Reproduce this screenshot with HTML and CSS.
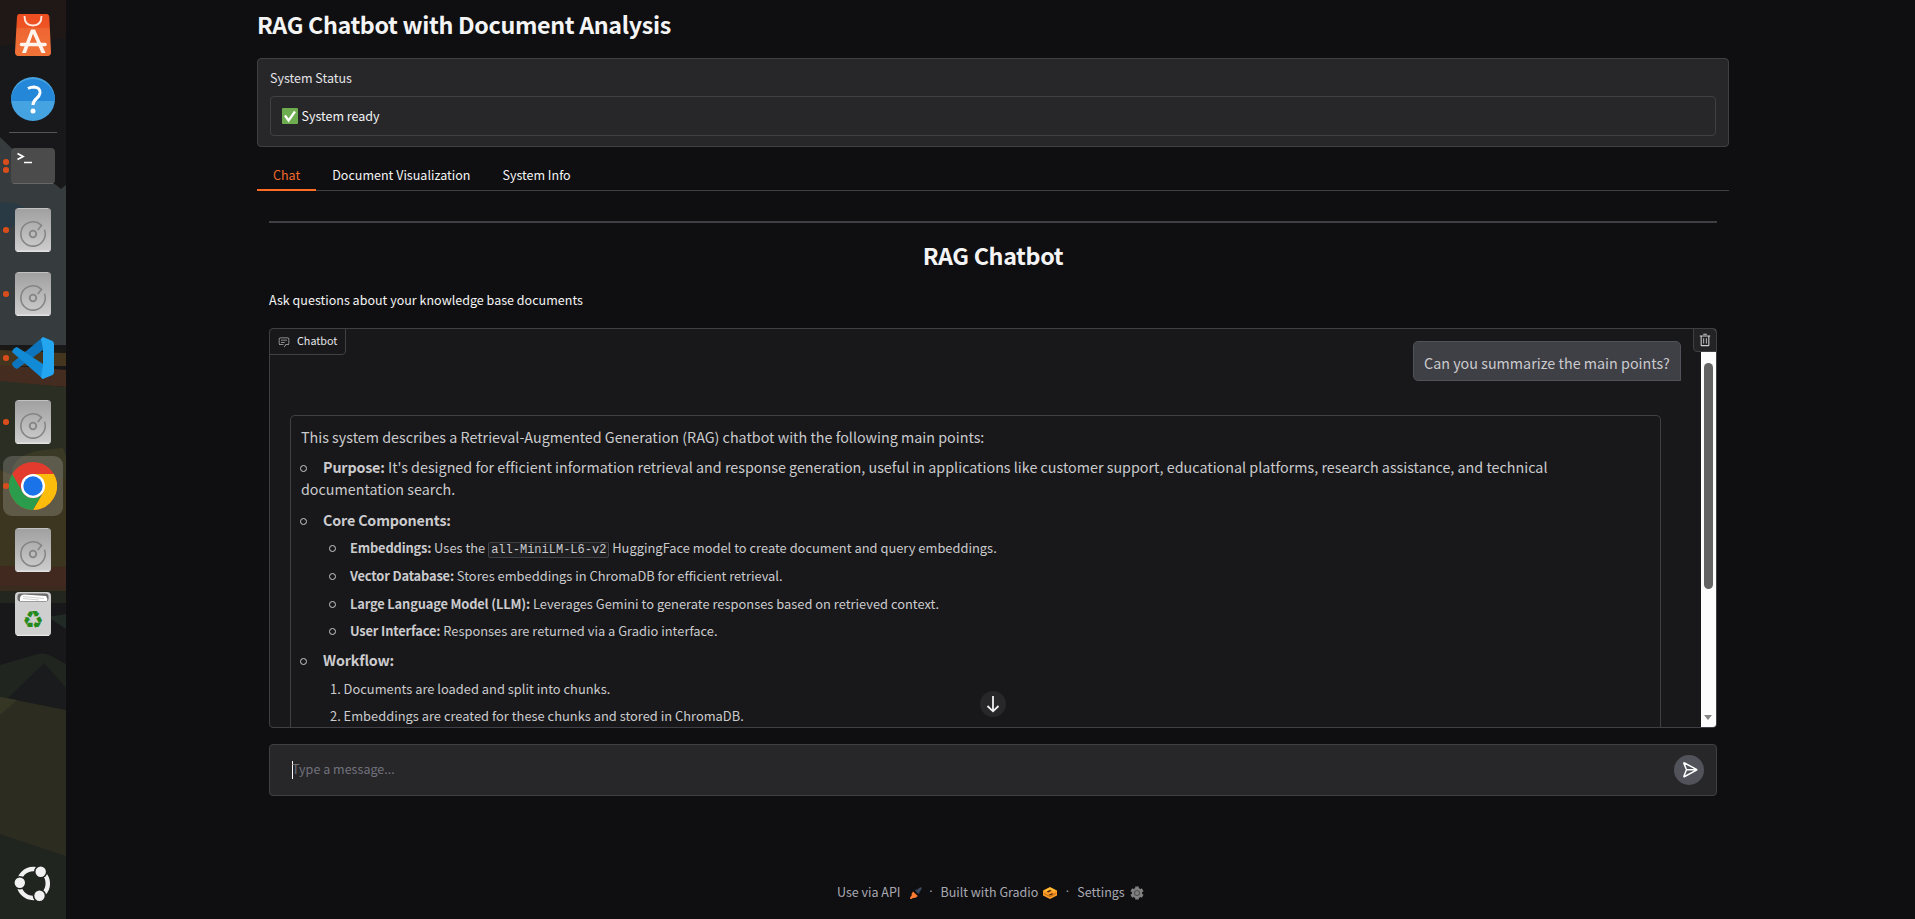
FILE: index.html
```html
<!DOCTYPE html>
<html lang="en">
<head>
<meta charset="utf-8">
<title>RAG Chatbot</title>
<link rel="stylesheet" href="styles.css">
</head>
<body>
<svg width="0" height="0" class="defs" aria-hidden="true">
  <defs>
    <linearGradient id="gDisk" x1="0" y1="0" x2="0" y2="1"><stop offset="0" stop-color="#9f9f9f"/><stop offset="1" stop-color="#cecece"/></linearGradient>
    <symbol id="disk" viewBox="0 0 48 48">
      <rect x="6" y="2" width="36" height="44" rx="3.5" fill="url(#gDisk)"/>
      <path d="M8 45.2h32" stroke="#e4e4e4" stroke-width="1.4"/>
      <path d="M9 2.6h30" stroke="#c4c4c4" stroke-width="1"/>
      <g fill="none" stroke="#858585" stroke-width="1.6">
        <circle cx="24" cy="28" r="3.3" stroke-width="1.8"/>
        <path d="M35.500 23.800A12.200 12.200 0 1 1 28.500 16.600M28.500 16.300L32.500 19.300L28.800 24"/>
      </g>
    </symbol>
  </defs>
</svg>
<div class="desktop">
  <aside class="dock">
    <svg class="wallpaper" viewBox="0 0 66 919" preserveAspectRatio="none">
      <rect width="66" height="919" fill="#18181a"/>
      <path d="M0 0H66V38L0 46Z" fill="#201817"/>
      <path d="M0 137L32 168L56 185L61 189L66 185V345H0Z" fill="#363c3d"/>
      <path d="M0 202Q22 202 28 211Q17 230 0 229Z" fill="#293a44"/>
      <path d="M0 347L30 351L66 353V366H0Z" fill="#44351f"/>
      <path d="M0 346L30 348L66 349V353L0 350Z" fill="#1b1916"/>
      <path d="M0 365L66 370V387L0 382Z" fill="#452c20"/>
      <path d="M0 381L66 387V480H0Z" fill="#2b2e23"/>
      <path d="M12 470Q16 453 44 450L63 448L66 456V482H0L12 475Z" fill="#3a3925"/>
      <path d="M0 470L12 475L66 478V570H0Z" fill="#3c351f"/>
      <path d="M0 566L66 567V588H0Z" fill="#41291f"/>
      <path d="M0 586L66 587V592L0 591Z" fill="#392b1d"/>
      <path d="M0 591H66V603H0Z" fill="#22261f"/>
      <path d="M48 617L66 614V629Z" fill="#222a25"/>
      <path d="M0 665L38 654Q45 652 53 657L66 664V715H0Z" fill="#20251f"/>
      <path d="M8 698L44 663L66 688V713Z" fill="#191b1c"/>
      <path d="M0 697L66 710V857L0 835Z" fill="#2c2d20"/>
      <path d="M0 697L17 700L0 715Z" fill="#363625"/>
      <path d="M0 834L66 856V919H0Z" fill="#202520"/>
    </svg>
    <div class="app">
      <svg viewBox="0 0 48 48"><defs><linearGradient id="gSoft" x1="0" y1="0" x2="0" y2="1"><stop offset="0" stop-color="#ee4d20"/><stop offset=".32" stop-color="#ee5423"/><stop offset=".33" stop-color="#ef6532"/><stop offset="1" stop-color="#f07338"/></linearGradient></defs>
        <path d="M10.500 3H37.500Q40 3 40.300 6L42 41Q42.200 45 38.500 45H9.500Q6 45 6 41L8 6Q8.200 3 10.500 3Z" fill="url(#gSoft)"/>
        <path d="M15.500 5Q15.500 14.500 24 14.500T32.500 5" fill="none" stroke="#fde6dc" stroke-width="1.9"/>
        <path d="M22 18.500H26L36.500 42H32.500L24 22.800L17 42H13Z" fill="#fff5ee"/>
        <path d="M12.500 33.500H36" stroke="#fff5ee" stroke-width="3.600" stroke-linecap="round"/></svg>
    </div>
    <div class="app">
      <svg viewBox="0 0 48 48"><circle cx="24" cy="24" r="22" fill="#45a3e2"/><path d="M2 26A22 22 0 0 1 46 26Z" fill="#2587d8"/><path d="M19 13.500Q22 12 25 12Q31.500 12.500 31 18Q30.500 21 27.500 23.500Q24 26.500 24 30" fill="none" stroke="#fff" stroke-width="3"/><circle cx="24" cy="36" r="2.500" fill="#fff"/></svg>
    </div>
    <div class="dock-rule"></div>
    <div class="app dots-2">
      <svg viewBox="0 0 48 48"><rect x="2" y="6" width="44" height="36" rx="4" fill="#4b4b4b"/><path d="M4 41.500H44" stroke="#666"/><path d="M8.500 11.500L14 14.500L8.500 17.500" fill="none" stroke="#fff" stroke-width="1.800"/><path d="M15 20.500H23" stroke="#fff" stroke-width="1.500"/></svg>
    </div>
    <div class="app dots-1"><svg><use href="#disk"/></svg></div>
    <div class="app dots-1"><svg><use href="#disk"/></svg></div>
    <div class="app dots-1">
      <svg viewBox="0 0 48 48"><path d="M34 3V16L8 35Q3 33 3 29Z" fill="#0d75bd"/><path d="M8 13Q4 14 3 18L34 45V30Z" fill="#118bd5"/><path d="M34 3L43.500 7Q45 8 45 10V38Q45 40 43.500 41L34 45Q32 44 32 43L34 31V15L32 5Z" fill="#24a5ef"/></svg>
    </div>
    <div class="app dots-1"><svg><use href="#disk"/></svg></div>
    <div class="app dots-1 focused">
      <svg viewBox="0 0 48 48"><circle cx="24" cy="24" r="24" fill="#e33b2e"/><path d="M24 12H44.800A24 24 0 0 1 24 48L34.400 30Z" fill="#fbbc0c"/><path d="M3.200 12L13.600 30A12 12 0 0 0 34.400 30L24 48A24 24 0 0 1 3.200 12Z" fill="#2a9c4b"/><circle cx="24" cy="24" r="12" fill="#fff"/><circle cx="24" cy="24" r="9.700" fill="#1a73e8"/></svg>
    </div>
    <div class="app"><svg><use href="#disk"/></svg></div>
    <div class="app">
      <svg viewBox="0 0 48 48"><rect x="6" y="2" width="36" height="44" rx="4" fill="#cfcfcf"/><rect x="8.500" y="3.500" width="31" height="8" rx="3" fill="#6b6b6b"/><path d="M11 11Q10 5 15 4.500L37 6Q39 9 38 11Z" fill="#fff"/><path d="M14 6.500L35 8.500M14 8.500L30 10" stroke="#bbb" stroke-width=".7"/><path d="M8 45.300H40" stroke="#eee"/>
        <text x="24" y="37.800" text-anchor="middle" class="recycle">♻</text></svg>
    </div>
    <div class="app launcher">
      <svg viewBox="0 0 48 48" fill="#f1f1f1"><circle cx="24.300" cy="24.500" r="14.500" fill="none" stroke="#f1f1f1" stroke-width="4.500"/><g stroke="#202520" stroke-width="1.600"><circle cx="10.800" cy="23.700" r="6"/><circle cx="31.700" cy="12.700" r="6"/><circle cx="30.500" cy="36.800" r="6"/></g></svg>
    </div>
  </aside>

  <main class="page">
    <h1 class="title">RAG Chatbot with Document Analysis</h1>

    <section class="status">
      <span class="status-label">System Status</span>
      <div class="status-field">
        <svg class="check" viewBox="0 0 16 16"><rect width="16" height="16" rx="1" fill="#6eac50"/><path d="M3 7.500L6.600 12.500L13 3.500" fill="none" stroke="#fff" stroke-width="2.300"/></svg>
        <span class="status-text">System ready</span>
      </div>
    </section>

    <nav class="tabs">
      <button class="tab active">Chat</button>
      <button class="tab wide">Document Visualization</button>
      <button class="tab">System Info</button>
    </nav>

    <section class="panel">
      <hr class="rule">
      <h2 class="heading">RAG Chatbot</h2>
      <p class="sub">Ask questions about your knowledge base documents</p>

      <div class="chat">
        <div class="chat-label">
          <svg viewBox="0 0 32 32" fill="#b0b0b3"><path d="M17.740 30L16 29l4-7h6a2 2 0 0 0 2-2V8a2 2 0 0 0-2-2H6a2 2 0 0 0-2 2v12a2 2 0 0 0 2 2h9v2H6a4 4 0 0 1-4-4V8a4 4 0 0 1 4-4h20a4 4 0 0 1 4 4v12a4 4 0 0 1-4 4h-4.840Z"/><path d="M8 10h16v2H8zM8 16h10v2H8z"/></svg>
          <span>Chatbot</span>
        </div>
        <div class="log">
          <div class="user"><span>Can you summarize the main points?</span></div>
          <div class="bot">
            <p>This system describes a Retrieval-Augmented Generation (RAG) chatbot with the following main points:</p>
            <ul class="outer">
              <li><b>Purpose:</b> It's designed for efficient information retrieval and response generation, useful in applications like customer support, educational platforms, research assistance, and technical<br>documentation search.</li>
              <li><b>Core Components:</b>
                <ul class="inner">
                  <li><b>Embeddings:</b> Uses the <code>all-MiniLM-L6-v2</code> HuggingFace model to create document and query embeddings.</li>
                  <li><b>Vector Database:</b> Stores embeddings in ChromaDB for efficient retrieval.</li>
                  <li><b>Large Language Model (LLM):</b> Leverages Gemini to generate responses based on retrieved context.</li>
                  <li><b>User Interface:</b> Responses are returned via a Gradio interface.</li>
                </ul>
              </li>
              <li><b>Workflow:</b>
                <div class="steps">
                  <div>1. Documents are loaded and split into chunks.</div>
                  <div>2. Embeddings are created for these chunks and stored in ChromaDB.</div>
                </div>
              </li>
            </ul>
          </div>
        </div>
        <div class="scrollbar"><div class="thumb"></div><div class="arrow"></div></div>
        <div class="clear"><svg viewBox="0 0 32 32" fill="#cfcfd1"><path d="M12 12h2v12h-2zM18 12h2v12h-2z"/><path d="M4 5.500v2.500h2v20a2 2 0 0 0 2 2h16a2 2 0 0 0 2-2V8h2V5.500ZM8.500 27.500V8h15v19.500ZM12 1.500h8v2.500h-8z"/></svg></div>
        <div class="down"><svg viewBox="0 0 26 26" fill="none" stroke="#f0f0f0" stroke-width="1.800"><path d="M13 5V20M7.500 15L13 20.300L18.500 15"/></svg></div>
      </div>

      <div class="composer">
        <span class="caret"></span><span class="placeholder">Type a message...</span>
        <div class="send"><svg viewBox="0 0 30 30" fill="none" stroke="#fff" stroke-width="1.500" stroke-linejoin="round"><path d="M10.500 8Q9.500 7.500 10 8.600L12.500 14.700L10 21Q9.700 22 10.700 21.500L22.500 15.200Q23.200 14.700 22.500 14.300ZM12.500 14.700H22.500"/></svg></div>
      </div>
    </section>

    <footer class="foot">
      <span>Use via API</span>
      <svg class="i-plug" viewBox="0 0 12 12"><path d="M6.300 4L8.500 1.500Q10.500 .100 11.600 .400Q12 1.700 10.600 3.500L8 6Z" fill="#3c4a5e"/><path d="M5.800 2.800L9.200 6.200" stroke="#35445a" stroke-width="2"/><path d="M3 4.500L7.800 9L6 10.500Q4 11.200 3 10.700L1.800 12L0 11.800L.300 10L1.600 8.800Q1.300 6.500 3 4.500Z" fill="#ff7c30"/></svg>
      <span class="dot">·</span>
      <span>Built with Gradio</span>
      <svg class="i-gradio" viewBox="0 0 14 12"><path d="M7 0L14 3.600V8.400L7 12L0 8.400V3.600Z" fill="#ff9a26"/><path d="M2 4L7 1.400L12 4" fill="none" stroke="#ffc23a" stroke-width="1.500"/><path d="M3.800 4.400L7 2.900L8.600 3.700L5 5.600ZM5.400 8L9 6.200L10.400 6.900L7 8.600Z" fill="#3a200a"/><path d="M.800 6.300L7 9.700L13.200 6.300" fill="none" stroke="#8a4b10" stroke-width=".600"/></svg>
      <span class="dot second">·</span>
      <span>Settings</span>
      <svg class="i-gear" viewBox="0 0 14 14"><circle cx="7" cy="7" r="5.200" fill="#808080"/><path d="M7 .600V13.400M1.300 3.700L12.700 10.300M12.700 3.700L1.300 10.300" stroke="#808080" stroke-width="3.600"/><circle cx="7" cy="7" r="2.500" fill="none" stroke="#505152" stroke-width="1.100"/></svg>
    </footer>
  </main>
</div>
</body>
</html>
```
FILE: styles.css
```css
*, *::before, *::after { box-sizing: border-box; margin: 0; padding: 0; }
body {
  background: #0f0f11;
  color: #f4f4f5;
  font-family: "Noto Sans CJK SC", "Noto Sans", sans-serif;
  overflow: hidden;
}
.defs { position: absolute; }
.desktop { display: flex; height: 919px; }

/* Dock */
.dock { position: relative; width: 66px; padding-top: 3px; display: flex; flex-direction: column; align-items: center; flex: none; }
.wallpaper { position: absolute; left: 0; top: 0; width: 66px; height: 919px; }
.app { position: relative; width: 66px; height: 64px; display: flex; align-items: center; justify-content: center; flex: none; }
.app svg { width: 48px; height: 48px; position: relative; }
.recycle { font-family: "DejaVu Sans", sans-serif; font-size: 24px; fill: #26891c; }
.dock-rule { position: relative; width: 48px; height: 1px; margin: 1px 0; background: #55555a; flex: none; }
.dots-1::before, .dots-2::before, .dots-2::after {
  content: ""; position: absolute; z-index: 2; left: 3px; top: 29px; width: 5.5px; height: 5.5px; border-radius: 50%; background: #d94c1b;
}
.dots-2::before { top: 25px; }
.dots-2::after { top: 33px; }
.focused::after { content: ""; position: absolute; left: 3px; top: 2px; width: 60px; height: 60px; border-radius: 9px; background: rgba(255,255,255,.18); }
.focused svg { z-index: 1; }
.launcher { margin-top: auto; margin-bottom: 4px; }

/* Page */
.page { width: 1472px; margin-left: 191px; display: flex; flex-direction: column; }
.title { height: 58px; line-height: 48px; font-size: 23.3px; letter-spacing: -.35px; font-weight: 600; white-space: nowrap; }
.status { height: 89px; border: 1px solid #3f3f46; border-radius: 4px; background: #27272a; padding: 8px 12px 0; }
.status-label { display: block; height: 29px; line-height: 21px; font-size: 12.5px; color: #e4e4e7; }
.status-field { height: 40px; border: 1px solid #3f3f46; border-radius: 4px; display: flex; align-items: center; padding-left: 11px; }
.check { width: 16px; height: 16px; margin-right: 3.5px; }
.status-text { font-size: 12.5px; margin-bottom: 2px; }
.tabs { height: 44px; display: flex; border-bottom: 1px solid #3f3f46; }
.tab { height: 44px; padding: 13px 16px 0; background: none; border: 0; border-bottom: 2px solid transparent; color: #f4f4f5; font: 12.5px/30px "Noto Sans CJK SC", sans-serif; text-align: left; white-space: nowrap; }
.tab.wide { letter-spacing: .03px; }
.tab.active { color: #f2692c; border-bottom-color: #ff6d24; }
.panel { padding: 30px 12px 0; }
.rule { border: 0; height: 2px; background: #3f3f46; }
.heading { height: 66px; line-height: 64px; text-align: center; font-size: 23.3px; letter-spacing: -.35px; font-weight: 600; }
.sub { height: 39px; line-height: 21px; font-size: 12.5px; letter-spacing: .02px; }

/* Chat */
.chat { position: relative; height: 400px; border: 1px solid #3f3f46; border-radius: 4px; background: #18181a; overflow: hidden; }
.chat-label { position: absolute; left: -1px; top: -1px; width: 77px; height: 27px; border: 1px solid #3f3f46; border-radius: 4px 0 4px 0; display: flex; align-items: center; padding-left: 8px; font-size: 10.75px; color: #e4e4e7; }
.chat-label svg { width: 12px; height: 12px; margin-right: 7px; }
.chat-label span { margin-bottom: 2px; }
.log { display: flex; flex-direction: column; padding: 12px 55px 0 20px; color: #cbcbce; }
.user { align-self: flex-end; margin-right: -20px; width: 268px; height: 40px; padding-left: 10px; background: #3f3f46; border: 1px solid #52525b; border-radius: 5px 5px 0 5px; font-size: 14.3px; line-height: 41px; letter-spacing: .02px; white-space: nowrap; }
.bot { margin-top: 34px; height: 312px; padding: 10px; border: 1px solid #3f3f46; border-bottom: 0; border-radius: 5px 5px 0 0; font-size: 14.3px; line-height: 22px; letter-spacing: .01px; white-space: nowrap; }
ul { list-style: none; }
b { font-weight: 600; letter-spacing: -.16px; }
.outer > li { margin-top: 9px; padding-left: 22px; position: relative; }
.outer > li:first-child { margin-top: 8px; padding-left: 0; text-indent: 22px; }
.outer li::before { content: ""; position: absolute; left: -1px; top: 9px; width: 7px; height: 7px; border: 1px solid #cbcbce; border-radius: 50%; }
.inner { margin: 6px 0 0 5px; }
.inner li { position: relative; height: 28px; padding-left: 22px; font-size: 12.87px; line-height: 21px; }
.inner li:nth-child(3) { height: 27px; }
.inner li:last-child { height: 20px; }
.outer .inner li::before { left: 1px; top: 8px; }
code { display: inline-block; height: 16px; padding: 1px 2px 0; border: 1px solid #3f3f46; border-radius: 2px; background: #202023; font: 12px/13px "Liberation Mono", monospace; letter-spacing: 0; vertical-align: baseline; }
.steps { margin: 8px 0 0 7px; font-size: 12.87px; line-height: 20px; }
.steps div { height: 27px; }
.steps div:last-child { height: 20px; }
.scrollbar { position: absolute; right: 0; top: 0; width: 15px; height: 398px; background: #fcfcfc; }
.thumb { margin: 34px 3px 0; height: 226px; border-radius: 5px; background: #636363; }
.arrow { margin: 126px 0 0 3px; width: 0; border: 4.5px solid transparent; border-top: 5px solid #858585; }
.clear { position: absolute; right: -1px; top: -1px; width: 24px; height: 24px; border: 1px solid #3f3f46; border-radius: 0 4px 0 4px; background: #232326; display: flex; align-items: center; justify-content: center; }
.clear svg { width: 14px; height: 14px; }
.down { position: absolute; left: 710px; top: 362px; width: 26px; height: 26px; border-radius: 50%; background: #27272a; }
.down svg { display: block; width: 26px; height: 26px; }

/* Composer */
.composer { display: flex; align-items: center; margin-top: 16px; height: 52px; border: 1px solid #3f3f46; border-radius: 4px; background: #27272a; padding: 0 12px 0 22px; }
.caret { width: 1px; height: 18px; background: #fff; }
.placeholder { flex: 1; font-size: 12.5px; margin: 0 0 3px -1px; letter-spacing: .03px; color: #71717a; }
.send { width: 30px; height: 30px; border-radius: 50%; background: #52525b; }
.send svg { display: block; width: 30px; height: 30px; }

/* Footer */
.foot { margin-top: 85px; height: 21px; padding-left: 580px; display: flex; align-items: center; font-size: 12.5px; line-height: 21px; color: #a8a8b2; white-space: nowrap; }
.i-plug { width: 12px; height: 12px; margin: 3px 0 0 9px; }
.i-gradio { width: 14px; height: 12px; margin: 2px 0 0 5px; }
.i-gear { width: 14px; height: 14px; margin: 3px 0 0 5px; }
.dot { width: 19px; text-align: center; font-family: "Open Sans", sans-serif; }
.dot.second { width: 20px; }
```
